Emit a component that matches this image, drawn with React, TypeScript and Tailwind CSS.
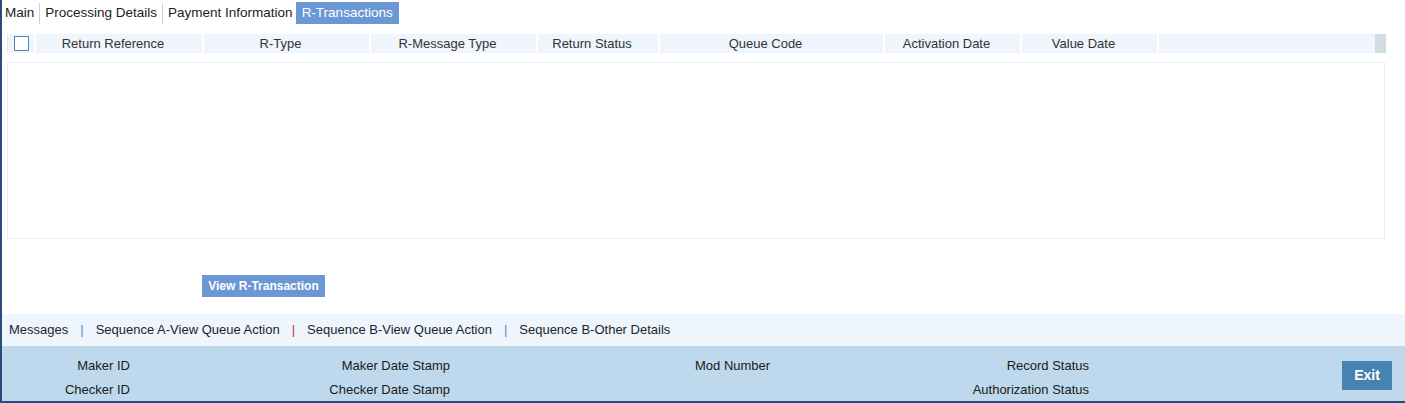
const tabs = ["Main", "Processing Details", "Payment Information"]

const columns = [
  { label: "Return Reference", w: "w-[166px]" },
  { label: "R-Type", w: "w-[165px]" },
  { label: "R-Message Type", w: "w-[165px]" },
  { label: "Return Status", w: "w-[120px]" },
  { label: "Queue Code", w: "w-[223px]" },
  { label: "Activation Date", w: "w-[135px]" },
  { label: "Value Date", w: "w-[135px]" },
]

const App = () => {
  return (
    <div className="w-[1405px] h-[403px] bg-white border-l-2 border-b-2 border-[#2b4a7e] flex flex-col font-['Liberation_Sans',Arial,sans-serif] overflow-hidden">
      {/* Tabs */}
      <div className="flex items-stretch h-[22px] mt-[2px] pl-[3px] text-[13.5px] text-[#1c1c1c]">
        {tabs.map((t, i) => (
          <div key={t} className="flex items-center">
            <span className="leading-[22px]">{t}</span>
            {i < tabs.length - 1 && <span className="ml-[5px] mr-[5px] w-px h-[21px] bg-[#d0d0d0]"></span>}
          </div>
        ))}
        <div className="ml-[3px] bg-[#6b98d4] text-white px-[6px] leading-[22px]">R-Transactions</div>
      </div>

      {/* Table header */}
      <div className="flex h-[19px] mt-[10px] ml-[5px] mr-[19px] border-l border-[#e3e8f2] text-[13px] text-[#333333]">
        <div className="w-[26px] bg-[#eef5fd] flex items-center justify-center pl-[1px]">
          <div className="w-[15px] h-[15px] border-[1.5px] border-[#4d86b4] bg-white"></div>
        </div>
        {columns.map((c) => (
          <div key={c.label} className={`${c.w} ml-[2px] bg-[#eef5fd] flex items-center justify-center pr-[12px] whitespace-nowrap`}>
            {c.label}
          </div>
        ))}
        <div className="flex-1 ml-[2px] bg-[#eef5fd]"></div>
        <div className="w-[11px] bg-[#cfdde1]"></div>
      </div>

      {/* Table body */}
      <div className="h-[177px] mt-[9px] ml-[5px] mr-[20px] border border-[#eceef7] bg-white"></div>

      {/* Action button */}
      <div className="mt-[34px] ml-[200px]">
        <button className="h-[22px] w-[123px] bg-[#6b97d4] text-white text-[12px] font-bold">View R-Transaction</button>
      </div>

      {/* Footer links */}
      <div className="mt-auto h-[32px] bg-[#eef5fd] flex items-center pl-[7px] text-[13px] text-[#1d1d2b]">
        <span className="text-[#2a1b35]">Messages</span>
        <span className="mx-[12px] text-[#4d8ad0]">|</span>
        <span>Sequence A-View Queue Action</span>
        <span className="mx-[12px] text-[#b23a35]">|</span>
        <span>Sequence B-View Queue Action</span>
        <span className="mx-[12px] text-[#4d8ad0]">|</span>
        <span>Sequence B-Other Details</span>
      </div>

      {/* Audit bar */}
      <div className="h-[55px] bg-[#bed9ed] flex text-[13px] text-[#1a1a1a]">
        <div className="grid grid-cols-[128px_320px_320px_319px] grid-rows-[24px_24px] mt-[8px] items-center">
          <div className="text-right">Maker ID</div>
          <div className="text-right">Maker Date Stamp</div>
          <div className="pl-[245px] whitespace-nowrap">Mod Number</div>
          <div className="text-right">Record Status</div>
          <div className="text-right">Checker ID</div>
          <div className="text-right">Checker Date Stamp</div>
          <div></div>
          <div className="text-right">Authorization Status</div>
        </div>
        <div className="flex-1"></div>
        <button className="self-start mt-[15px] mr-[13px] w-[50px] h-[29px] bg-[#4783b0] text-white text-[14px] font-bold">Exit</button>
      </div>
    </div>
  )
}

export default App
